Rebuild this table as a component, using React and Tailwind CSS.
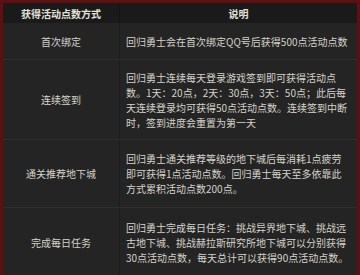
export default function App() {
  const font = { fontFamily: '"Noto Sans CJK SC", "Noto Sans", sans-serif' };
  const rows = [
    { label: "首次绑定", h: "h-[37px]", lines: ["回归勇士会在首次绑定QQ号后获得500点活动点数"] },
    {
      label: "连续签到",
      h: "h-[80px]",
      lines: [
        "回归勇士连续每天登录游戏签到即可获得活动点",
        "数。1天：20点，2天：30点，3天：50点；此后每",
        "天连续登录均可获得50点活动点数。连续签到中断",
        "时，签到进度会重置为第一天",
      ],
    },
    {
      label: "通关推荐地下城",
      h: "h-[68px]",
      lines: [
        "回归勇士通关推荐等级的地下城后每消耗1点疲劳",
        "即可获得1点活动点数。回归勇士每天至多依靠此",
        "方式累积活动点数200点。",
      ],
    },
    {
      label: "完成每日任务",
      h: "h-[70px]",
      lines: [
        "回归勇士完成每日任务：挑战异界地下城、挑战远",
        "古地下城、挑战赫拉斯研究所地下城可以分别获得",
        "30点活动点数，每天总计可以获得90点活动点数。",
      ],
    },
  ];
  return (
    <div
      className="w-[360px] h-[275px] overflow-hidden bg-[#5e0f0f] pt-[3px] px-[3px]"
      style={font}
    >
      <div className="bg-[#242424] h-full">
        <div className="flex h-[20px] bg-[#1a1a1a] text-[10px] font-bold text-[#e4e1da] leading-[15px]">
          <div className="w-[117px] flex items-center justify-center border-r border-[#141414]">
            获得活动点数方式
          </div>
          <div className="flex-1 flex items-center justify-center">说明</div>
        </div>
        {rows.map((r) => (
          <div key={r.label} className={`flex ${r.h} border-b border-[#2f2f2f] text-[10px] leading-[15px] text-[#d6d3ca]`}>
            <div className="w-[117px] flex items-center justify-center border-r border-[#1c1c1c] shrink-0">
              {r.label}
            </div>
            <div className="flex-1 flex flex-col justify-center pl-[6px]">
              {r.lines.map((l, i) => (
                <div key={i} className="whitespace-nowrap">
                  {l}
                </div>
              ))}
            </div>
          </div>
        ))}
      </div>
    </div>
  );
}
